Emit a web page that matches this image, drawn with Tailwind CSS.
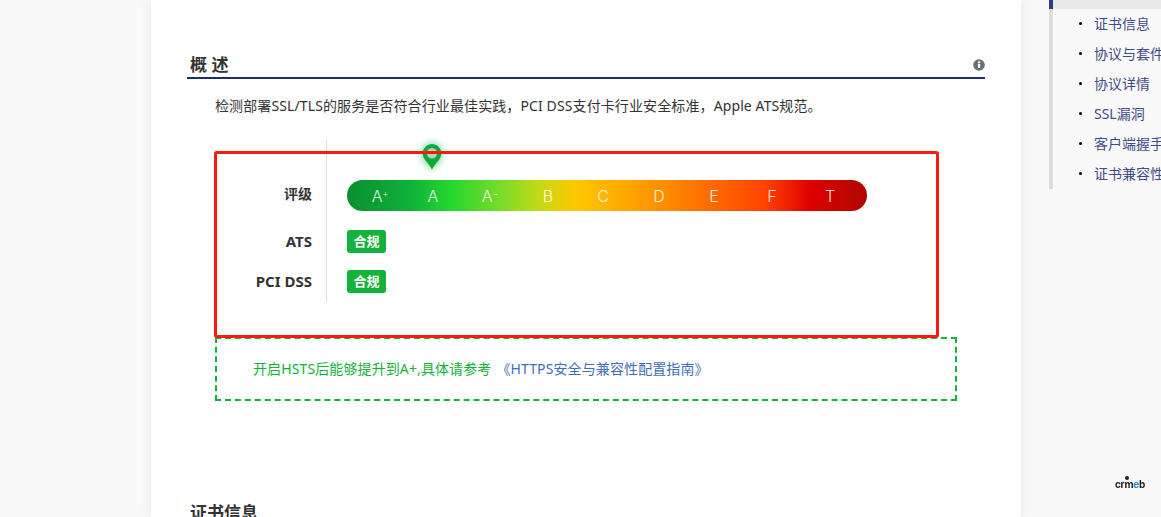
<!DOCTYPE html>
<html lang="zh-CN">
  <head>
    <meta charset="UTF-8">
    <title>概述</title>
    <script src="https://cdn.jsdelivr.net/npm/@tailwindcss/browser@4"></script>
  </head>
  <body class="bg-[#f9f9f9] font-['Noto_Sans','Noto_Sans_CJK_SC',sans-serif] text-[#333]">
    <div class="flex h-[517px] w-[1161px] overflow-hidden">
      <!-- main card -->
      <main class="ml-[151px] h-[517px] w-[870px] shrink-0 bg-white px-9 pt-[52px] shadow-[0_0_12px_rgba(0,0,0,0.08)]">
        <div class="flex h-[27px] items-center justify-between border-b-2 border-[#1c2f5c] pl-[3px]">
          <h2 class="text-[17px] leading-[24px] font-bold text-[#333]">概 述</h2>
          <svg class="mt-[1px] h-3 w-3" viewBox="0 0 12 12"><circle cx="6" cy="6" r="5.8" fill="#6b6f7b"/><rect x="5" y="5" width="2.2" height="4" fill="#fff"/><rect x="5" y="2.400" width="2.2" height="1.8" fill="#fff"/></svg>
        </div>
        <p class="mt-[17px] ml-7 whitespace-nowrap text-sm leading-[20px] tracking-[0.11px] text-[#333]">检测部署SSL/TLS的服务是否符合行业最佳实践，PCI DSS支付卡行业安全标准，Apple ATS规范。</p>

        <!-- grades -->
        <div class="relative mt-6 ml-7 h-[197px] w-[742px]">
          <div class="grid h-[162px] w-full grid-cols-[112px_1fr]">
            <div class="border-r border-[#ddd] pt-[39px] pr-[14px] text-right text-[15px] font-bold">
              <div class="h-[30px] text-sm leading-[30px]">评级</div>
              <div class="mt-[20px] h-[24px] leading-[24px]">ATS</div>
              <div class="mt-4 h-[24px] leading-[24px]">PCI DSS</div>
            </div>
            <div class="relative pt-[40px] pl-5">
              <div class="flex h-[31px] w-[520px] items-center rounded-full bg-[linear-gradient(90deg,#0b8f2f_0%,#0eb13a_12%,#25d72f_20%,#7ddc2a_30%,#c4d916_37%,#ffc800_44%,#ff9f00_56%,#ff6a00_70%,#ff4500_80%,#e00000_89%,#ad0900_100%)] text-center font-['Inter',sans-serif] text-base font-light text-white/85">
                <span class="w-[66px]">A<sup class="text-[9px]">+</sup></span>
                <span class="w-[40px]">A</span>
                <span class="w-[74px]">A<sup class="text-[9px]">−</sup></span>
                <span class="w-[42px]">B</span>
                <span class="w-[68px]">C</span>
                <span class="w-[44px]">D</span>
                <span class="w-[66px]">E</span>
                <span class="w-[50px]">F</span>
                <span class="w-[66px]">T</span>
              </div>
              <div class="mt-[19px] flex h-[23px] w-[39px] items-center justify-center rounded-[3px] bg-[#13b23a] text-[13px] font-bold text-white">合规</div>
              <div class="mt-[17px] flex h-[23px] w-[39px] items-center justify-center rounded-[3px] bg-[#13b23a] text-[13px] font-bold text-white">合规</div>
              <!-- position pin -->
              <svg class="absolute top-[3px] left-[95px] h-[28px] w-[20px] drop-shadow-[0_0_4px_rgba(20,180,60,0.75)]" viewBox="0 0 20 28"><path fill="#0fa83c" d="M10 27 C8 21 .7 17 .7 10.300 A9.300 9.300 0 0 1 19.300 10.300 C19.300 17 12 21 10 27 Z"/><circle cx="10" cy="10.300" r="5.300" fill="#b5d4bc"/></svg>
            </div>
          </div>
          <!-- highlight drawn over the screenshot -->
          <div class="absolute top-[11px] -left-px h-[187px] w-[725px] rounded-[3px] border-[3px] border-[#f91a12]"></div>
        </div>

        <div class="ml-7 flex h-[64px] w-[742px] items-center whitespace-nowrap border-2 border-dashed border-[#13b23a] pl-9 text-sm tracking-[0.11px]">
          <span class="text-[#13b23a]">开启HSTS后能够提升到A+,具体请参考</span>
          <span class="ml-[5px] text-[#3f6fb5]">《HTTPS安全与兼容性配置指南》</span>
        </div>

        <h2 class="mt-[100px] pl-[3px] text-[17px] leading-[24px] font-bold text-[#333]">证书信息</h2>
      </main>

      <!-- side nav -->
      <aside class="ml-7 h-[189px] w-[112px] shrink-0 border-l-4 border-[#dcdcdc] text-sm text-[#3f4a8a]">
        <div class="-ml-1 h-[9px] w-[116px] border-l-4 border-[#2d3a8c] bg-[#e8e8e8]"></div>
        <ul class="overflow-hidden whitespace-nowrap">
          <li class="flex h-[30px] items-center pl-[26px]"><span class="mr-3 h-[3px] w-[3px] shrink-0 -translate-y-px rounded-full bg-black"></span>证书信息</li>
          <li class="flex h-[30px] items-center pl-[26px]"><span class="mr-3 h-[3px] w-[3px] shrink-0 -translate-y-px rounded-full bg-black"></span>协议与套件</li>
          <li class="flex h-[30px] items-center pl-[26px]"><span class="mr-3 h-[3px] w-[3px] shrink-0 -translate-y-px rounded-full bg-black"></span>协议详情</li>
          <li class="flex h-[30px] items-center pl-[26px]"><span class="mr-3 h-[3px] w-[3px] shrink-0 -translate-y-px rounded-full bg-black"></span>SSL漏洞</li>
          <li class="flex h-[30px] items-center pl-[26px]"><span class="mr-3 h-[3px] w-[3px] shrink-0 -translate-y-px rounded-full bg-black"></span>客户端握手</li>
          <li class="flex h-[30px] items-center pl-[26px]"><span class="mr-3 h-[3px] w-[3px] shrink-0 -translate-y-px rounded-full bg-black"></span>证书兼容性</li>
        </ul>
      </aside>
    </div>
    <!-- watermark -->
    <div class="fixed top-[477px] left-[1115px] font-['Inter',sans-serif] text-[10px] leading-[14px] font-bold tracking-[-0.3px] text-[#222]">
      <span class="absolute top-[-1px] left-[10px] h-[4px] w-[4px] rounded-full bg-[#222]"></span>crm<span class="text-[#1a8fe0]">e</span>b
    </div>
  </body>
</html>
